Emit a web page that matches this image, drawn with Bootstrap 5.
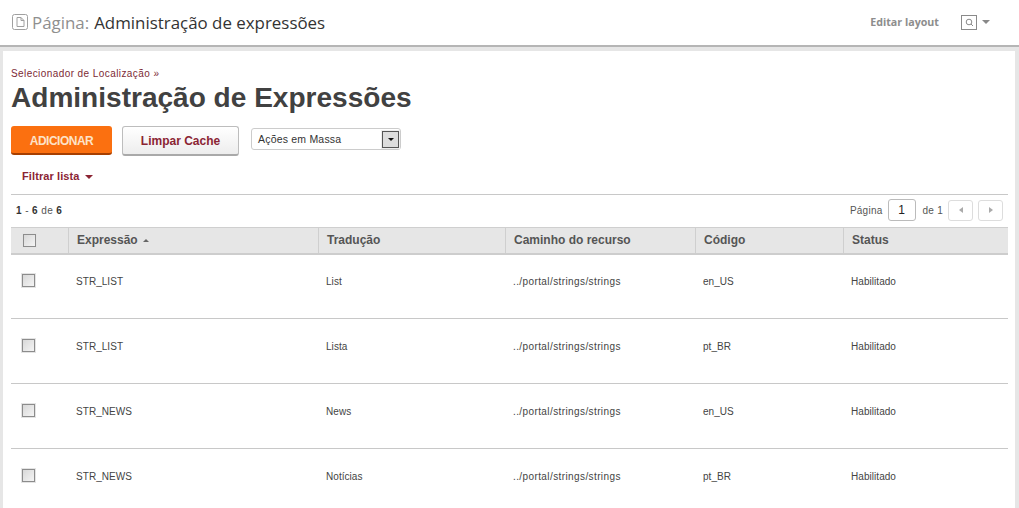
<!DOCTYPE html>
<html lang="pt">
<head>
<meta charset="utf-8">
<title>Administração de Expressões</title>
<link href="https://cdn.jsdelivr.net/npm/bootstrap@5.3.0/dist/css/bootstrap.min.css" rel="stylesheet">
<style>
html,body{height:508px;overflow:hidden}
body{background:#e6e6e6;font-family:"Liberation Sans",Arial,sans-serif;font-size:10px;color:#444}
.topbar{height:47px;background:#fff;border-bottom:2px solid #b5b5b5;padding:0 29px 0 12px}
.page-ttl{font-family:"Open Sans",sans-serif;font-size:16.9px;color:#333;gap:3px;padding-top:1px}
.page-ttl .lbl{color:#8f8f8f;margin-right:-2px}
.edit-link{font-family:"Open Sans",sans-serif;font-size:10.7px;font-weight:700;color:#8d8d8d;text-decoration:none;margin-right:22px}
.search-box{width:16px;height:15px;border:1px solid #8a8a8a;margin-right:5px}
.caret-dn{width:0;height:0;border-left:4px solid transparent;border-right:4px solid transparent;border-top:4px solid #888}
.sheet{background:#fff;margin:4px 4px 0 3px;padding:17px 7px 0 8px;height:457px;overflow:hidden}
.crumb{font-size:10px;color:#7d2a35;text-decoration:none;line-height:12px;display:block;letter-spacing:.42px}
.big-title{font-size:28.05px;font-weight:700;color:#414141;line-height:36px;margin:0 0 10px}
.act-row{gap:10px;height:30px}
.btn-add{width:101px;height:29px;background:#fb7010;border:0;border-bottom:2px solid #a73f00;border-radius:3px;color:#fde3c8;font-size:12px;font-weight:700;padding:2px 0 0;letter-spacing:-.5px}
.btn-clear{width:117px;height:30px;background:linear-gradient(#fff,#ededed);border:1px solid #bdbdbd;border-bottom:2px solid #a9a9a9;border-radius:3px;color:#8b2433;font-size:12px;font-weight:700;padding:0}
.mass{width:150px;height:22px;border:1px solid #ccc;border-radius:3px;margin:2px 0 0 2px;padding:0 1px 0 6px;font-size:10.5px;color:#333;letter-spacing:.2px}
.mass .mass-t{padding-top:2px}
.sel-arrow{width:17px;height:17px;border:1px solid #555;background:#ddd;outline:1px solid #eee}
.sel-arrow .caret-dn{border-top-color:#111;border-left-width:3.5px;border-right-width:3.5px;border-top-width:3.5px}
.filter-row{height:39px;padding:2px 0 0 11px;border-bottom:1px solid #c8c8c8;color:#8b2433;font-size:11px;font-weight:700;gap:5px;letter-spacing:.1px}
.filter-row .caret-dn{border-top-color:#8b2433;margin-top:2px}
.pager-row{height:32px;padding:0 5px 2px 5px;font-size:10px;color:#555}
.pager-row .cnt{letter-spacing:.4px}
.pager-row .lbl-t{letter-spacing:.25px}
.pager-row b{color:#333}
.pg-input{width:28px;height:22px;border:1px solid #bbb;border-radius:3px;font-size:12px;color:#222;margin:0 7px 0 5px}
.pg-btn{width:25px;height:21px;border:1px solid #ddd;border-radius:3px;margin-left:5px}
.pg-btn svg{display:block}
.data-tbl{table-layout:fixed;width:997px;margin:0;border-collapse:collapse}
.data-tbl th{background:#e6e6e6;height:26px;padding:0 8px 0 8.5px;border-top:1px solid #cfcfcf;border-bottom:2px solid #cdcdcd;border-left:1px solid #cfcfcf;font-size:12px;font-weight:700;color:#555;vertical-align:middle;box-shadow:none}
.data-tbl th:first-child{border-left:0;padding-left:8px}
.data-tbl td{height:65px;padding:21px 8px 0 8px;border-bottom:1px solid #c8c8c8;font-size:10px;color:#444;vertical-align:top;box-shadow:none;line-height:14px;letter-spacing:.05px}
.data-tbl tbody tr:first-child td{padding-top:20px}
.data-tbl td.path{letter-spacing:.4px}
.chk{display:block;width:13px;height:13px;border:1px solid #8c8c8c;outline:1px solid #e4e4e4;background:linear-gradient(135deg,#d8d8d8,#f4f4f4)}
th .chk{margin-left:4px}
td .chk{margin:-1px 0 0 3px}
.sort-up{display:inline-block;width:0;height:0;border-left:3px solid transparent;border-right:3px solid transparent;border-bottom:3px solid #666;margin:0 0 2px 2px}
</style>
</head>
<body>
<header class="topbar d-flex align-items-center justify-content-between">
  <div class="page-ttl d-flex align-items-center">
    <svg width="17" height="17" viewBox="0 0 17 17" fill="none" stroke="#a0a0a0"><rect x=".5" y=".5" width="15" height="15" rx="2"/><path d="M5 3.5h4l3 3v6H5zM9 3.5v3h3"/></svg>
    <span class="lbl">Página:</span><span class="ms-1">Administração de expressões</span>
  </div>
  <div class="d-flex align-items-center">
    <a href="#" class="edit-link">Editar layout</a>
    <span class="search-box d-flex align-items-center justify-content-center"><svg width="9" height="9" viewBox="0 0 9 9" fill="none" stroke="#8a8a8a"><circle cx="4" cy="4" r="2.8"/><path d="M6 6l2 2"/></svg></span>
    <span class="caret-dn"></span>
  </div>
</header>
<main class="sheet">
  <a href="#" class="crumb">Selecionador de Localização »</a>
  <h1 class="big-title">Administração de Expressões</h1>
  <div class="act-row d-flex align-items-start">
    <button class="btn btn-add" type="button">ADICIONAR</button>
    <button class="btn btn-clear" type="button">Limpar Cache</button>
    <div class="mass d-flex align-items-center justify-content-between"><span class="mass-t">Ações em Massa</span><span class="sel-arrow d-flex align-items-center justify-content-center"><span class="caret-dn"></span></span></div>
  </div>
  <div class="filter-row d-flex align-items-center"><span>Filtrar lista</span><i class="caret-dn"></i></div>
  <div class="pager-row d-flex align-items-center justify-content-between">
    <div class="cnt"><b>1</b> - <b>6</b> de <b>6</b></div>
    <div class="d-flex align-items-center">
      <span class="lbl-t">Página</span>
      <span class="pg-input d-flex align-items-center justify-content-center">1</span>
      <span class="lbl-t">de 1</span>
      <span class="pg-btn d-flex align-items-center justify-content-center"><svg width="4" height="6" viewBox="0 0 4 6"><path d="M4 0v6L0 3z" fill="#aaa"/></svg></span>
      <span class="pg-btn d-flex align-items-center justify-content-center"><svg width="4" height="6" viewBox="0 0 4 6"><path d="M0 0v6l4-3z" fill="#aaa"/></svg></span>
    </div>
  </div>
  <table class="table data-tbl">
    <colgroup><col style="width:57px"><col style="width:250px"><col style="width:187px"><col style="width:190px"><col style="width:148px"><col style="width:165px"></colgroup>
    <thead><tr><th><span class="chk"></span></th><th>Expressão <i class="sort-up"></i></th><th>Tradução</th><th>Caminho do recurso</th><th>Código</th><th>Status</th></tr></thead>
    <tbody>
      <tr><td><span class="chk"></span></td><td>STR_LIST</td><td>List</td><td class="path">../portal/strings/strings</td><td>en_US</td><td>Habilitado</td></tr>
      <tr><td><span class="chk"></span></td><td>STR_LIST</td><td>Lista</td><td class="path">../portal/strings/strings</td><td>pt_BR</td><td>Habilitado</td></tr>
      <tr><td><span class="chk"></span></td><td>STR_NEWS</td><td>News</td><td class="path">../portal/strings/strings</td><td>en_US</td><td>Habilitado</td></tr>
      <tr><td><span class="chk"></span></td><td>STR_NEWS</td><td>Notícias</td><td class="path">../portal/strings/strings</td><td>pt_BR</td><td>Habilitado</td></tr>
    </tbody>
  </table>
</main>
</body>
</html>
